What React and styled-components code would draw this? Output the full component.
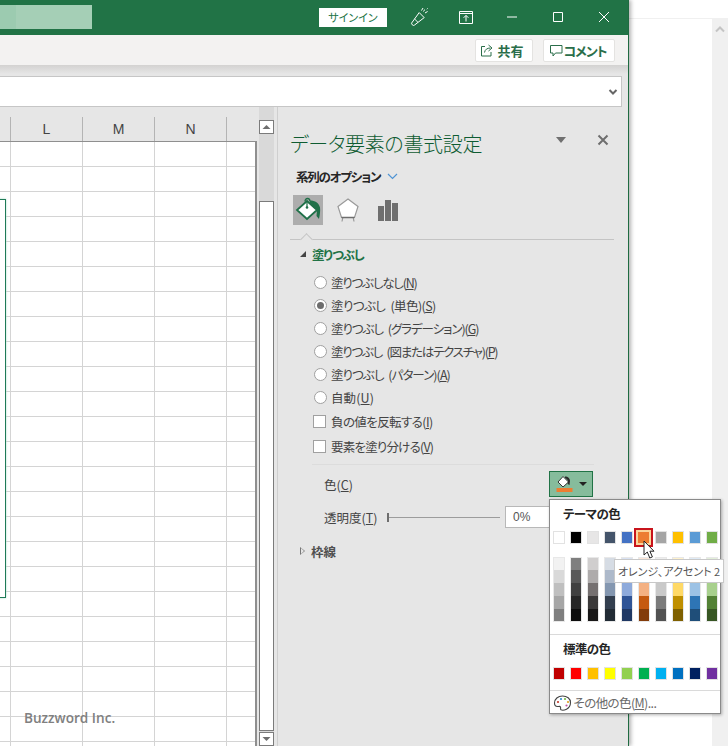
import styled, { createGlobalStyle } from 'styled-components';

const GlobalStyle = createGlobalStyle`
    html, body { margin: 0; padding: 0; background: #fff; }
    body {
        width: 728px;
        height: 746px;
        overflow: hidden;
        font-family: "Noto Sans CJK JP", "Noto Sans", sans-serif;
        font-feature-settings: "palt";
    }
    * { box-sizing: border-box; }
`;

const Page = styled.div`
    display: flex;
    width: 728px;
    height: 746px;
    overflow: hidden;
`;

const Window = styled.div`
    position: relative;
    z-index: 1;
    display: flex;
    flex-direction: column;
    width: 629px;
    height: 746px;
    flex: none;
    border-right: 1.5px solid #1f6b41;
    box-shadow: 2px 0 4px rgba(0, 0, 0, 0.3);
    background: #e6e6e6;
`;

const TitleBar = styled.div`
    display: flex;
    align-items: center;
    height: 35px;
    flex: none;
    background: #217346;
    color: #fff;
`;

const FileName = styled.div`
    width: 92px;
    height: 24px;
    margin-top: -1px;
    background: linear-gradient(90deg, #9ccbb0 0 16px, #a5cfb6 16px);
`;

const SignIn = styled.div`
    width: 68px;
    height: 19px;
    margin-left: 227px;
    margin-top: -0.5px;
    background: #fff;
    color: #217346;
    font-size: 11px;
    line-height: 19px;
    text-align: center;
`;

const TitleIcon = styled.div`
    position: absolute;
    top: 5px;
    left: ${({$x}) => $x}px;
    width: 24px;
    height: 24px;
    display: flex;
    align-items: center;
    justify-content: center;
`;

const Ribbon = styled.div`
    display: flex;
    justify-content: flex-end;
    align-items: center;
    gap: 10px;
    height: 30px;
    flex: none;
    padding-right: 13.5px;
    background: #f3f2f1;
`;

const RibbonButton = styled.div`
    display: flex;
    align-items: center;
    gap: ${({$gap}) => $gap}px;
    width: ${({$w}) => $w}px;
    height: 23px;
    padding-left: ${({$pad}) => $pad}px;
    background: #fff;
    border: 1px solid #e4e3e1;
    border-radius: 2px;
    color: #2a6e4a;
    font-size: 13px;
    font-weight: 700;
    letter-spacing: ${({$track}) => $track}px;
`;

const FormulaStrip = styled.div`
    height: 42px;
    flex: none;
    padding: 11px 6px 0 0;
    background: linear-gradient(#d3d2d1 0, #e6e6e6 9px);
`;

const FormulaBox = styled.div`
    display: flex;
    align-items: center;
    justify-content: flex-end;
    height: 31px;
    margin-left: -2px;
    padding-right: 3px;
    background: #fff;
    border: 1px solid #c6c6c6;
`;

const Body = styled.div`
    display: flex;
    flex: 1;
    min-height: 0;
`;

const Sheet = styled.div`
    position: relative;
    width: 259px;
    flex: none;
    padding-top: 10px;
    overflow: hidden;
`;

const ColumnHeads = styled.div`
    display: grid;
    grid-template-columns: 11px repeat(3, 72px) 29px;
    height: 24px;
`;

const ColumnHead = styled.div`
    border-right: 1px solid #b4b4b4;
    color: #444;
    font: 14px/24px "Liberation Sans", sans-serif;
    text-align: center;
    &:last-child { border-right: 0; }
`;

const Cells = styled.div`
    display: grid;
    grid-template-columns: 11px repeat(3, 72px) 28px;
    grid-auto-rows: 25px;
    width: 257px;
    background: #fff;
    border-top: 1px solid #8f8f8f;
    border-right: 2px solid #8f8f8f;
`;

const Cell = styled.div`
    border-right: 1px solid #d4d4d4;
    border-bottom: 1px solid #d4d4d4;
    &:nth-child(5n) { border-right: 0; }
`;

const ChartEdge = styled.div`
    position: absolute;
    left: -4px;
    top: 92px;
    width: 10px;
    height: 399px;
    background: #fff;
    border: 1px solid #1f7a57;
    box-shadow: 0 0 2px #a6dcc8;
`;

const Watermark = styled.div`
    position: absolute;
    left: 24px;
    top: 601px;
    color: #808080;
    font: 600 13.6px/20px "Open Sans", sans-serif;
`;

const ScrollBar = styled.div`
    display: flex;
    flex-direction: column;
    width: 15px;
    flex: none;
    padding-top: 13px;
    background: #d9d9d9;
`;

const ScrollButton = styled.div`
    display: flex;
    align-items: center;
    justify-content: center;
    width: 15px;
    height: 14px;
    flex: none;
    background: #fff;
    border: 1px solid #7b7b7b;
`;

const ScrollThumb = styled.div`
    width: 15px;
    flex: 1;
    margin: 67px 0 1px;
    background: #fff;
    border: 1px solid #7b7b7b;
`;

const Panel = styled.div`
    flex: 1;
    margin-left: 3px;
    padding: 0 0 0 12px;
    border-left: 1px solid #cfcfcf;
    color: #444;
`;

const PanelHead = styled.div`
    display: flex;
    align-items: center;
    height: 38px;
    margin-top: 18px;
    padding-right: 19px;
`;

const PanelTitle = styled.div`
    flex: 1;
    color: #0f5c32;
    font-size: 20px;
    font-weight: 300;
    letter-spacing: -0.3px;
    line-height: 38px;
    white-space: nowrap;
`;

const PanelMenuCaret = styled.div`
    width: 0;
    height: 0;
    margin: -8px 31px 0 0;
    border: 5px solid transparent;
    border-top: 6px solid #707070;
    border-bottom: 0;
`;

const PanelClose = styled.div`
    display: flex;
    width: 12px;
    height: 12px;
    margin-top: -8px;
`;

const OptionsRow = styled.div`
    display: flex;
    align-items: center;
    gap: 7px;
    height: 20px;
    margin: 3px 0 0 6px;
    color: #262626;
    font-size: 12.5px;
    font-weight: 700;
    letter-spacing: -1.2px;
`;

const TabIcons = styled.div`
    display: flex;
    align-items: center;
    gap: 10px;
    margin: 9px 0 0 3px;
`;

const TabIcon = styled.div`
    display: flex;
    align-items: center;
    justify-content: center;
    width: 30px;
    height: 30px;
    background: ${({$active}) => $active ? '#adadad' : 'transparent'};
`;

const TabRule = styled.div`
    position: relative;
    height: 1px;
    margin: 14px 14px 0 0;
    background: #c4c4c4;
    &::after {
        content: "";
        position: absolute;
        left: 12px;
        top: -4px;
        width: 8px;
        height: 8px;
        background: #e6e6e6;
        border-left: 1px solid #c4c4c4;
        border-top: 1px solid #c4c4c4;
        transform: rotate(45deg);
    }
`;

const SectionHead = styled.div`
    display: flex;
    align-items: center;
    gap: 6px;
    height: 20px;
    margin: ${({$top}) => $top}px 0 0 ${({$left}) => $left}px;
    color: ${({$open}) => $open ? '#217346' : '#505050'};
    font-size: 12.5px;
    font-weight: 700;
    letter-spacing: ${({$open}) => $open ? -1.2 : 0}px;
`;

const OpenCaret = styled.div`
    width: 0;
    height: 0;
    border-left: 6px solid transparent;
    border-bottom: 6px solid #444;
`;

const ClosedCaret = styled.div`
    width: 0;
    height: 0;
    border: 4.5px solid transparent;
    border-left: 5px solid #777;
    border-right: 0;
    position: relative;
    &::after {
        content: "";
        position: absolute;
        left: -4.5px;
        top: -3px;
        border: 3px solid transparent;
        border-left: 3.4px solid #e6e6e6;
        border-right: 0;
    }
`;

const OptionList = styled.div`
    display: flex;
    flex-direction: column;
    margin: 7px 0 0 23px;
`;

const Option = styled.div`
    display: flex;
    align-items: center;
    gap: 4px;
    height: ${({$h}) => $h}px;
    font-size: 12.5px;
    white-space: nowrap;
    u { text-underline-offset: 1px; }
`;

const OptionText = styled.span`
    letter-spacing: ${({$track}) => $track}px;
    word-spacing: 3px;
`;

const Radio = styled.div`
    display: flex;
    align-items: center;
    justify-content: center;
    width: 13px;
    height: 13px;
    margin-left: 1px;
    border-radius: 50%;
    background: #fff;
    border: 1px solid #a0a0a0;
    &::after {
        content: "";
        width: 7px;
        height: 7px;
        border-radius: 50%;
        background: ${({$on}) => $on ? '#6d6d6d' : 'transparent'};
    }
`;

const Check = styled.div`
    width: 13px;
    height: 13px;
    margin-right: 1px;
    background: #fff;
    border: 1px solid #a0a0a0;
`;

const Separator = styled.div`
    height: 1px;
    margin: 5px 34px 0 22px;
    background: #dcdcdc;
`;

const ColorRow = styled.div`
    display: flex;
    align-items: center;
    height: 26px;
    margin: 6px 35px 0 34px;
    font-size: 12.5px;
`;

const ColorButton = styled.div`
    display: flex;
    align-items: center;
    justify-content: center;
    gap: 6px;
    width: 44px;
    height: 26px;
    margin-left: auto;
    background: #86bc9c;
    border: 1px solid #217346;
`;

const ButtonCaret = styled.div`
    width: 0;
    height: 0;
    border: 4px solid transparent;
    border-top: 4px solid #222;
    border-bottom: 0;
`;

const AlphaRow = styled.div`
    display: flex;
    align-items: center;
    height: 22px;
    margin: 9px 0 0 34px;
    font-size: 12.5px;
`;

const AlphaLabel = styled.div`
    width: 63px;
    white-space: nowrap;
`;

const Slider = styled.div`
    position: relative;
    width: 113px;
    height: 1px;
    background: #9c9c9c;
    &::before {
        content: "";
        position: absolute;
        left: 0;
        top: -4px;
        width: 2px;
        height: 9px;
        background: #6e6e6e;
    }
`;

const AlphaInput = styled.div`
    width: 50px;
    height: 22px;
    margin-left: 5px;
    padding-left: 7px;
    background: #fff;
    border: 1px solid #b8b8b8;
    font: 12px/20px "Liberation Sans", sans-serif;
    color: #555;
`;

const ColorMenu = styled.div`
    position: absolute;
    left: 549px;
    top: 499px;
    z-index: 3;
    width: 172px;
    height: 215px;
    padding-left: 2.5px;
    background: #fff;
    border: 1px solid #8a8a8a;
    box-shadow: 1px 1px 3px rgba(0, 0, 0, 0.3);
`;

const MenuHead = styled.div`
    height: 20px;
    margin: ${({$top}) => $top}px 0 0 10.5px;
    color: #262626;
    font-size: 12.5px;
    font-weight: 700;
    letter-spacing: -0.6px;
    line-height: 20px;
`;

const SwatchRow = styled.div`
    display: flex;
    gap: 4.5px;
    margin-top: ${({$top}) => $top}px;
`;

const Swatch = styled.div`
    position: relative;
    width: 12.5px;
    height: 13px;
    flex: none;
    background: ${({$c}) => $c};
    border: 1px solid #e2e2e2;
`;

const SwatchFocus = styled.div`
    position: absolute;
    left: -5px;
    top: -4px;
    width: 19px;
    height: 19px;
    background: #ed7d31;
    border: 2px solid #c8141c;
    box-shadow: inset 0 0 0 2px #fbd59a;
`;

const ShadeColumn = styled.div`
    display: flex;
    flex-direction: column;
    width: 12.5px;
    flex: none;
    outline: 1px solid #e8e8e8;
    outline-offset: -1px;
`;

const Shade = styled.div`
    height: 13px;
    background: ${({$c}) => $c};
`;

const MenuRule = styled.div`
    height: 1px;
    margin: ${({$top}) => $top}px 0 0 -2.5px;
    background: #dadada;
`;

const MoreColors = styled.div`
    display: flex;
    align-items: center;
    gap: 2px;
    height: 23px;
    color: #6a6a6a;
    font-size: 12.5px;
    letter-spacing: -0.6px;
    white-space: nowrap;
`;

const Tip = styled.div`
    position: absolute;
    left: 614px;
    top: 559px;
    z-index: 5;
    width: 110px;
    height: 24px;
    background: #fff;
    border: 1px solid #c8c8c8;
    color: #555;
    font-size: 11px;
    line-height: 22px;
    text-align: center;
    white-space: nowrap;
`;

const Cursor = styled.svg`
    position: absolute;
    left: 643px;
    top: 540px;
    z-index: 6;
`;

const Outside = styled.div`
    display: flex;
    flex: 1;
    margin-top: 18px;
    border-top: 1px solid #f0f0f0;
`;

const OutsideDoc = styled.div`
    flex: 1;
`;

const OutsideBar = styled.div`
    display: flex;
    justify-content: center;
    width: 16px;
    padding-top: 7px;
    background: #f0f0f0;
`;

const THEME = ['#ffffff', '#000000', '#e7e6e6', '#44546a', '#4472c4', '#ed7d31', '#a5a5a5', '#ffc000', '#5b9bd5', '#70ad47'];
const SHADES = [
    ['#f2f2f2', '#d9d9d9', '#bfbfbf', '#a6a6a6', '#7f7f7f'],
    ['#7f7f7f', '#595959', '#404040', '#262626', '#0d0d0d'],
    ['#d0cece', '#aeabab', '#757070', '#3a3838', '#181717'],
    ['#d6dce4', '#adb9ca', '#8497b0', '#333f4f', '#222b35'],
    ['#d9e2f3', '#b4c6e7', '#8eaadb', '#2f5496', '#1f3864'],
    ['#fbe4d5', '#f7caac', '#f4b183', '#c55a11', '#833c0b'],
    ['#ededed', '#dbdbdb', '#c9c9c9', '#7b7b7b', '#525252'],
    ['#fff2cc', '#ffe599', '#ffd966', '#bf8f00', '#7f6000'],
    ['#deeaf6', '#bdd7ee', '#9cc2e5', '#2e75b5', '#1f4e79'],
    ['#e2efd9', '#c5e0b3', '#a8d08d', '#538135', '#375623'],
];
const STANDARD = ['#c00000', '#ff0000', '#ffc000', '#ffff00', '#92d050', '#00b050', '#00b0f0', '#0070c0', '#002060', '#7030a0'];

// kana are much narrower in the original UI font, so each row carries its own tracking
const FILL_OPTIONS = [
    { parts: ['塗りつぶしなし(', 'N', ')'], track: -1.2 },
    { parts: ['塗りつぶし (単色)(', 'S', ')'], track: -0.6 },
    { parts: ['塗りつぶし (グラデーション)(', 'G', ')'], track: -1.05 },
    { parts: ['塗りつぶし (図またはテクスチャ)(', 'P', ')'], track: -1.25 },
    { parts: ['塗りつぶし (パターン)(', 'A', ')'], track: -0.95 },
    { parts: ['自動(', 'U', ')'], track: 0.1 },
];
const CHECK_OPTIONS = [
    { parts: ['負の値を反転する(', 'I', ')'], track: -0.6 },
    { parts: ['要素を塗り分ける(', 'V', ')'], track: -0.8 },
];

function ArrowGlyph({ down }) {
    return <svg width="9" height="6" viewBox="0 0 9 6">
        <path d={down ? 'M0.5 1h8L4.5 5z' : 'M0.5 5h8L4.5 1z'} fill="#6e6e6e" />
    </svg>;
}

function PopperIcon() {
    return <svg width="20" height="20" viewBox="0 0 20 20" fill="none" stroke="#fff" strokeWidth="1">
        <path d="M1.5 16.2 9.2 5.6l5 5-9.6 7.4a1.7 1.7 0 0 1-2.3-.1z" />
        <path d="M4.6 12 8 15.4" />
        <path d="M11.5 3.5 13 1M15 6l2.6-1.5M13.2 4.4 15 2.6M16.8 2.2l.8-.8" />
    </svg>;
}

function RestoreIcon() {
    return <svg width="20" height="20" viewBox="0 0 20 20" fill="none" stroke="#fff" strokeWidth="1">
        <path d="M3.5 4.5h13v12h-13zM3.5 6.5h13" />
        <path d="M10 14.5V8.5M7.6 10.8 10 8.4l2.4 2.4" />
    </svg>;
}

function ShareIcon() {
    return <svg width="17" height="17" viewBox="0 0 17 17" fill="none" stroke="#2a6e4a" strokeWidth="1">
        <path d="M7 4.500H3.500v9.500h9.500v-4" />
        <path d="M6.500 10.500c.5-3 2.600-4.500 6-4.500M10.500 3l3.500 3-3.500 3" />
    </svg>;
}

function CommentIcon() {
    return <svg width="15" height="15" viewBox="0 0 15 15" fill="none" stroke="#2a6e4a" strokeWidth="1">
        <path d="M1.500 2.500h11.500v7.500H6.500l-2.500 3v-3H1.500z" />
    </svg>;
}

function FillIcon() {
    return <svg width="26" height="26" viewBox="0 0 26 26">
        <path d="M10 4.500c0-4 5-4 5 0" fill="none" stroke="#1f7048" strokeWidth="1.300" />
        <path d="M12 4 22 13 12 22 2 13z" fill="#fff" stroke="#1f7048" strokeWidth="1.800" />
        <path d="M12 4v6" stroke="#1f7048" strokeWidth="1.200" />
        <circle cx="12" cy="10.500" r="1.300" fill="#1f7048" />
        <path d="M15 3.500c5 0 9 2.500 10 7 .4 3 0 7-1 11.500l-2.500-3 .5-6-7-6.500z" fill="#1f7048" />
    </svg>;
}

function PentagonIcon() {
    return <svg width="24" height="26" viewBox="0 0 24 26" fill="none" stroke="#9a9a9a">
        <path d="M12 2 22 9.500 18.500 20.500h-13L2 9.500z" fill="#fff" strokeWidth="1.200" />
        <path d="M6 24.500l.8-4M18 24.500l-.8-4" strokeWidth="1.200" />
        <path d="M5.500 20.500h13" stroke="#6e6e6e" strokeWidth="1.500" />
    </svg>;
}

function BarsIcon() {
    return <svg width="22" height="22" viewBox="0 0 22 22">
        <path d="M1 7h6v15H1zM8 1h6v21H8zM15 4h6v18h-6z" fill="#6f6f6f" />
    </svg>;
}

function BucketIcon() {
    return <svg width="17" height="18" viewBox="0 0 17 18">
        <path d="M7 1.500 12.500 7 7 12 2 7z" fill="#fff" stroke="#333" strokeWidth="1" />
        <path d="M9 1.500c3 0 5 2 5 4.500l-.5 4-1.800-1 .4-3C11.500 4.500 10.500 3.500 9 3z" fill="#2b2b2b" />
        <rect x="0.500" y="13" width="16" height="4" fill="#ed7d31" />
    </svg>;
}

function PaletteIcon() {
    return <svg width="19" height="18" viewBox="0 0 19 18" fill="none">
        <path d="M9.500 2C5 2 1.500 5 1.500 9c0 2 1 3.500 3 3.500 1.500 0 2.500-.5 3 .5.500 1-.5 2 .5 2.800 2 1 9.500-.3 9.500-7.300C17.500 4.500 14 2 9.500 2z" stroke="#444" strokeWidth="1.100" />
        <circle cx="5" cy="8" r="1.100" fill="#c0392b" />
        <circle cx="8" cy="5" r="1.100" fill="#2f8fd0" />
        <circle cx="12" cy="5" r="1.100" fill="#7ab648" />
        <circle cx="15" cy="8" r="1.100" fill="#e0a020" />
        <circle cx="13.500" cy="11.500" r="1.100" fill="#c558a8" />
    </svg>;
}

function Mnemonic({ parts, track }) {
    return <OptionText $track={track}>{parts[0]}<u>{parts[1]}</u>{parts[2]}</OptionText>;
}

export default function App() {
    const cells = Array.from({ length: 5 * 25 });

    return <Page>
        <GlobalStyle />
        <Window>
            <TitleBar>
                <FileName />
                <SignIn>サインイン</SignIn>
                <TitleIcon $x={408}><PopperIcon /></TitleIcon>
                <TitleIcon $x={454}><RestoreIcon /></TitleIcon>
                <TitleIcon $x={500}>
                    <svg width="12" height="12" viewBox="0 0 12 12"><path d="M1 6h10" stroke="#fff" /></svg>
                </TitleIcon>
                <TitleIcon $x={546}>
                    <svg width="12" height="12" viewBox="0 0 12 12"><path d="M1.500 1.500h9v9h-9z" fill="none" stroke="#fff" /></svg>
                </TitleIcon>
                <TitleIcon $x={592}>
                    <svg width="12" height="12" viewBox="0 0 12 12"><path d="M1 1l10 10M11 1 1 11" stroke="#fff" /></svg>
                </TitleIcon>
            </TitleBar>
            <Ribbon>
                <RibbonButton $w={58} $pad={2} $gap={3} $track={0}><ShareIcon />共有</RibbonButton>
                <RibbonButton $w={72} $pad={5} $gap={0} $track={-1}><CommentIcon />コメント</RibbonButton>
            </Ribbon>
            <FormulaStrip>
                <FormulaBox>
                    <svg width="10" height="8" viewBox="0 0 10 8"><path d="M1.500 2 5 5.500 8.500 2" fill="none" stroke="#666" strokeWidth="2" /></svg>
                </FormulaBox>
            </FormulaStrip>
            <Body>
                <Sheet>
                    <ColumnHeads>
                        <ColumnHead />
                        <ColumnHead>L</ColumnHead>
                        <ColumnHead>M</ColumnHead>
                        <ColumnHead>N</ColumnHead>
                        <ColumnHead />
                    </ColumnHeads>
                    <Cells>
                        {cells.map((_, i) => <Cell key={i} />)}
                    </Cells>
                    <ChartEdge />
                    <Watermark>Buzzword Inc.</Watermark>
                </Sheet>
                <ScrollBar>
                    <ScrollButton><ArrowGlyph /></ScrollButton>
                    <ScrollThumb />
                    <ScrollButton><ArrowGlyph down /></ScrollButton>
                </ScrollBar>
                <Panel>
                    <PanelHead>
                        <PanelTitle>データ要素の書式設定</PanelTitle>
                        <PanelMenuCaret />
                        <PanelClose>
                            <svg width="12" height="12" viewBox="0 0 12 12"><path d="M1.500 1.500l9 9M10.500 1.500l-9 9" stroke="#6e6e6e" strokeWidth="2" /></svg>
                        </PanelClose>
                    </PanelHead>
                    <OptionsRow>
                        系列のオプション
                        <svg width="11" height="7" viewBox="0 0 11 7"><path d="M1 1l4.500 4.500L10 1" fill="none" stroke="#4f94d4" strokeWidth="1.200" /></svg>
                    </OptionsRow>
                    <TabIcons>
                        <TabIcon $active><FillIcon /></TabIcon>
                        <TabIcon><PentagonIcon /></TabIcon>
                        <TabIcon><BarsIcon /></TabIcon>
                    </TabIcons>
                    <TabRule />
                    <SectionHead $open $top={4} $left={10}><OpenCaret />塗りつぶし</SectionHead>
                    <OptionList>
                        {FILL_OPTIONS.map(({ parts, track }, i) => <Option key={parts[1]} $h={23}>
                            <Radio $on={i === 1} /><Mnemonic parts={parts} track={track} />
                        </Option>)}
                        {CHECK_OPTIONS.map(({ parts, track }) => <Option key={parts[1]} $h={25}>
                            <Check /><Mnemonic parts={parts} track={track} />
                        </Option>)}
                    </OptionList>
                    <Separator />
                    <ColorRow>
                        <span>色(<u>C</u>)</span>
                        <ColorButton><BucketIcon /><ButtonCaret /></ColorButton>
                    </ColorRow>
                    <AlphaRow>
                        <AlphaLabel>透明度(<u>T</u>)</AlphaLabel>
                        <Slider />
                        <AlphaInput>0%</AlphaInput>
                    </AlphaRow>
                    <SectionHead $top={13} $left={10}><ClosedCaret />枠線</SectionHead>
                </Panel>
            </Body>
            <ColorMenu>
                <MenuHead $top={4}>テーマの色</MenuHead>
                <SwatchRow $top={7}>
                    {THEME.map((c, i) => <Swatch key={c} $c={c}>{i === 5 && <SwatchFocus />}</Swatch>)}
                </SwatchRow>
                <SwatchRow $top={13}>
                    {SHADES.map((col, i) => <ShadeColumn key={i}>
                        {col.map(c => <Shade key={c} $c={c} />)}
                    </ShadeColumn>)}
                </SwatchRow>
                <MenuRule $top={12} />
                <MenuHead $top={4}>標準の色</MenuHead>
                <SwatchRow $top={8}>
                    {STANDARD.map(c => <Swatch key={c} $c={c} />)}
                </SwatchRow>
                <MenuRule $top={10} />
                <MoreColors><PaletteIcon /><span>その他の色(<u>M</u>)...</span></MoreColors>
            </ColorMenu>
            <Tip>オレンジ、アクセント 2</Tip>
            <Cursor width="13" height="19" viewBox="0 0 13 19">
                <path d="M1 1v14l3.300-3 2.500 6 2.600-1.100-2.500-5.700H11z" fill="#fff" stroke="#222" strokeWidth="1" />
            </Cursor>
        </Window>
        <Outside>
            <OutsideDoc />
            <OutsideBar>
                <svg width="10" height="7" viewBox="0 0 10 7"><path d="M1 5.500 5 1.500l4 4" fill="none" stroke="#c4c4c4" strokeWidth="2" /></svg>
            </OutsideBar>
        </Outside>
    </Page>
}
